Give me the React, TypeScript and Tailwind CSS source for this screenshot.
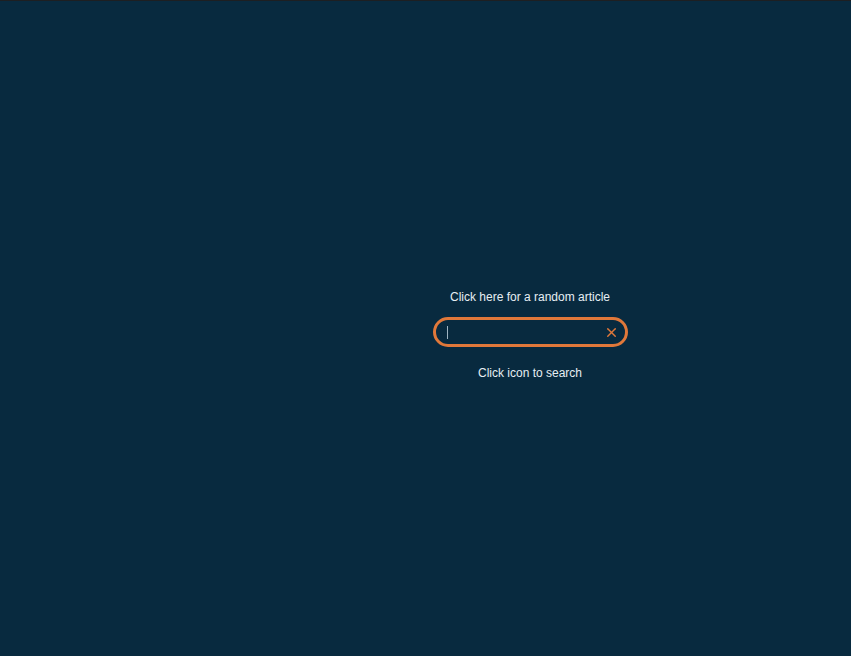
import { X } from "lucide-react"

export default function App() {
  return (
    <div className="h-[656px] w-full bg-[#082a3f] border-t border-[#1d1f22] font-['Liberation_Sans',Arial,sans-serif] text-[#e6eef3]">
      <div className="flex flex-col items-center pl-[209px] pt-[289px]">
        <p className="text-[12px] leading-[14px]">Click here for a random article</p>
        <div className="relative mt-[13px] flex h-[30px] w-[195px] items-center rounded-full border-[3px] border-[#e0783a] pl-[11px] pr-[6px]">
          <span className="absolute left-[11px] top-[6px] h-[13px] w-px bg-[#9fb4c2]" />
          <input className="h-full min-w-0 flex-1 bg-transparent text-[12px] text-[#e6eef3] outline-none" />
          <X className="h-[15px] w-[15px] text-[#e0783a]" strokeWidth={2.2} />
        </div>
        <p className="mt-[19px] text-[12px] leading-[14px]">Click icon to search</p>
      </div>
    </div>
  )
}
